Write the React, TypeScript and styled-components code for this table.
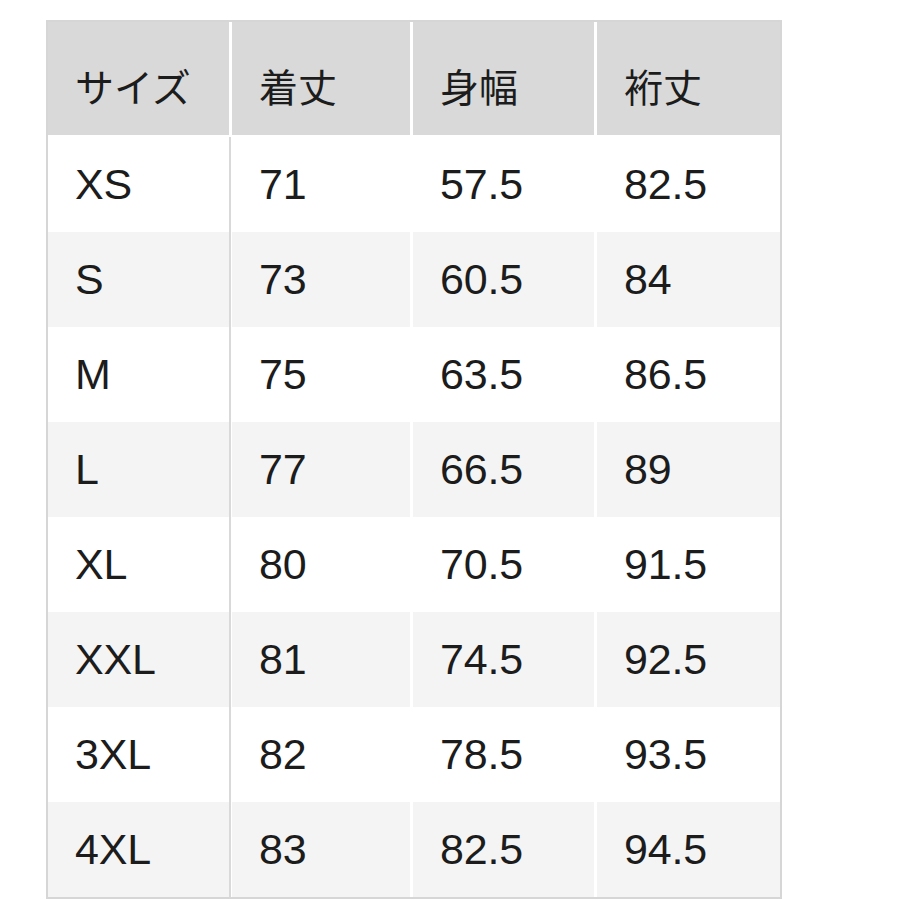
import styled, { createGlobalStyle } from "styled-components"

const GlobalStyle = createGlobalStyle`
    html, body {
        margin: 0;
        padding: 0;
        background: #ffffff;
    }
`

const Page = styled.div`
    padding: 20px 0 0 46px;
    font-family: "Liberation Sans", "Noto Sans CJK JP", sans-serif;
    color: #1c1c1c;
`

const Table = styled.div`
    width: 732px;
    border: 2px solid #d6d6d6;
    background: #ffffff;
`

const Row = styled.div<{ $height: number }>`
    display: grid;
    grid-template-columns: 181px 178px 181px 1fr;
    column-gap: 3px;
    height: ${p => p.$height}px;
    background: #ffffff;
`

const Cell = styled.div<{ $shade: string; $divider?: boolean }>`
    display: flex;
    align-items: center;
    padding-left: 27px;
    background: ${p => p.$shade};
    font-size: 43px;
    letter-spacing: -0.2px;
    box-sizing: border-box;
    border-right: ${p => (p.$divider ? "2px solid #d9d9d9" : "none")};
    margin-right: ${p => (p.$divider ? "-2px" : "0")};
`

const HeadCell = styled.div`
    display: flex;
    align-items: center;
    padding: 12px 0 0 27px;
    box-sizing: border-box;
    background: #d9d9d9;
    font-family: "Noto Sans CJK JP", "Liberation Sans", sans-serif;
    font-size: 39px;
    border-bottom: 2px solid #ffffff;
`

const headers = ["サイズ", "着丈", "身幅", "裄丈"]

const rows: string[][] = [
    ["XS", "71", "57.5", "82.5"],
    ["S", "73", "60.5", "84"],
    ["M", "75", "63.5", "86.5"],
    ["L", "77", "66.5", "89"],
    ["XL", "80", "70.5", "91.5"],
    ["XXL", "81", "74.5", "92.5"],
    ["3XL", "82", "78.5", "93.5"],
    ["4XL", "83", "82.5", "94.5"],
]

const App = () => {
    return <Page>
        <GlobalStyle />
        <Table>
            <Row $height={115}>
                {headers.map(h => <HeadCell key={h}>{h}</HeadCell>)}
            </Row>
            {rows.map((r, i) => {
                // rows alternate white / light grey
                const shade = i % 2 === 0 ? "#ffffff" : "#f4f4f4"
                return <Row key={r[0]} $height={95}>
                    {r.map((v, j) => <Cell key={j} $shade={shade} $divider={j === 0}>{v}</Cell>)}
                </Row>
            })}
        </Table>
    </Page>
}

export default App
